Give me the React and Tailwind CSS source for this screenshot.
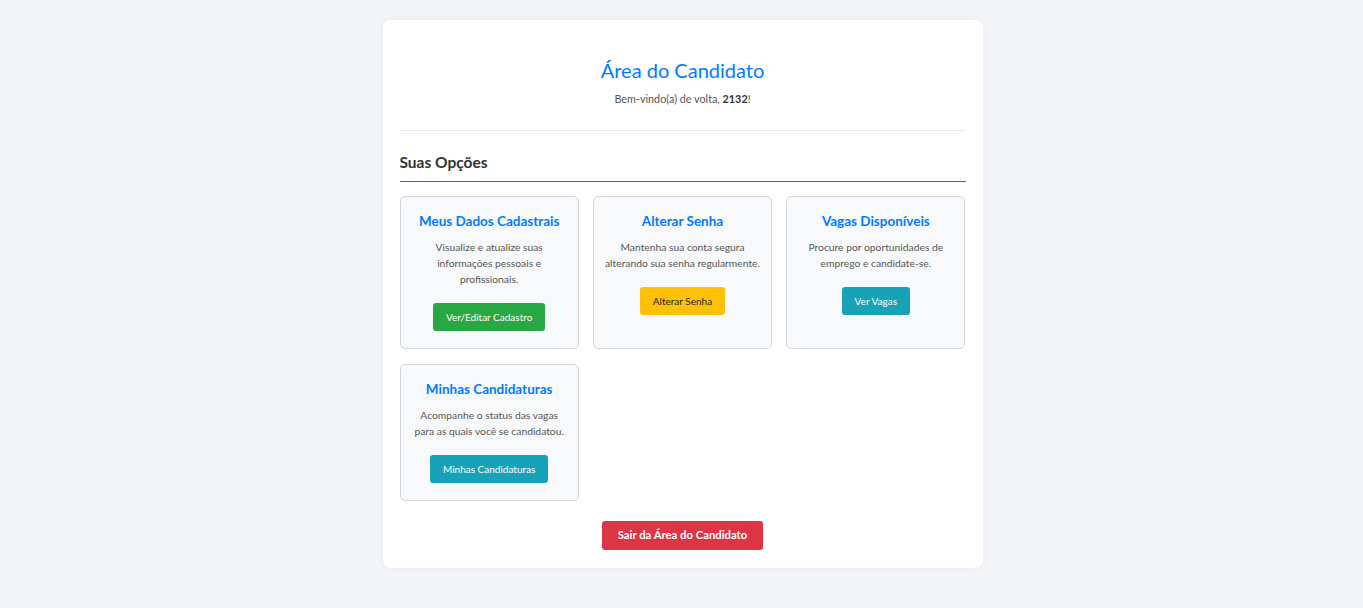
const options = [
  {
    title: "Meus Dados Cadastrais",
    lines: ["Visualize e atualize suas", "informações pessoais e", "profissionais."],
    label: "Ver/Editar Cadastro",
    btn: "bg-[#28a745] text-white",
  },
  {
    title: "Alterar Senha",
    lines: ["Mantenha sua conta segura", "alterando sua senha regularmente."],
    label: "Alterar Senha",
    btn: "bg-[#ffc107] text-[#212529]",
  },
  {
    title: "Vagas Disponíveis",
    lines: ["Procure por oportunidades de", "emprego e candidate-se."],
    label: "Ver Vagas",
    btn: "bg-[#17a2b8] text-white",
  },
  {
    title: "Minhas Candidaturas",
    lines: ["Acompanhe o status das vagas", "para as quais você se candidatou."],
    label: "Minhas Candidaturas",
    btn: "bg-[#17a2b8] text-white",
  },
];

function OptionCard({ title, lines, label, btn }) {
  return (
    <div className="flex flex-col items-center rounded-[5px] border border-[#d3d6da] bg-[#f8f9fa] px-[10px] pt-[14px] pb-[17px] text-center">
      <h3 className="text-[13.5px] font-bold leading-[20px] text-[#007bff]">
        {title}
      </h3>
      <p className="mt-[8px] text-[10.3px] leading-[16px] whitespace-nowrap text-[#555]">
        {lines.map((l, i) => (
          <span key={i} className="block">
            {l}
          </span>
        ))}
      </p>
      <button
        className={`mt-[16px] h-[28px] rounded-[3px] px-[13px] text-[10px] ${btn}`}
      >
        {label}
      </button>
    </div>
  );
}

export default function App() {
  return (
    <div
      className="min-h-[608px] bg-[#f4f5f8] pt-[20px] pb-[40px]"
      style={{ fontFamily: "Lato, 'Noto Sans', sans-serif" }}
    >
      <div className="mx-auto w-[600px] translate-x-[1px] rounded-[8px] bg-white px-[17px] pt-[36px] pb-[18px] shadow-[0_0_8px_rgba(0,0,0,0.06)]">
        <div className="text-center">
          <h1 className="text-[20px] leading-[28px] text-[#007bff]">
            Área do Candidato
          </h1>
          <p className="mt-[7px] text-[10.8px] leading-[16px] text-[#555]">
            Bem-vindo(a) de volta, <b className="text-[#333]">2132</b>!
          </p>
        </div>
        <hr className="mt-[23px] border-[#e8e8e8]" />
        <h2 className="mt-[20px] border-b border-[#1f6fd0] pb-[8px] text-[15.5px] font-bold leading-[22px] text-[#333]">
          Suas Opções
        </h2>
        <div className="mt-[14px] grid grid-cols-3 gap-x-[14px] gap-y-[15px]">
          {options.map((o) => (
            <OptionCard key={o.title} {...o} />
          ))}
        </div>
        <div className="mt-[20px] flex justify-center">
          <button className="h-[29px] rounded-[3px] bg-[#dc3545] px-[16px] text-[11.3px] font-bold text-white">
            Sair da Área do Candidato
          </button>
        </div>
      </div>
    </div>
  );
}
